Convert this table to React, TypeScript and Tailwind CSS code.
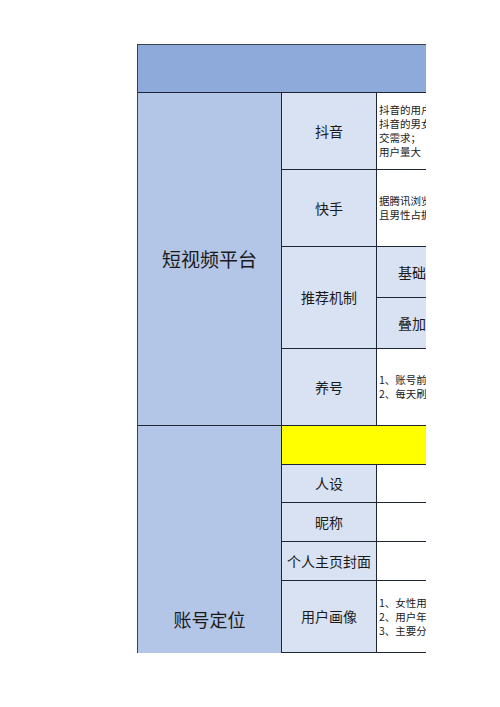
const line = "border-r border-b border-[#1f2633]";
const font = { fontFamily: '"Noto Sans CJK SC", "Noto Sans", sans-serif' };

function Note({ lines }: { lines: string[] }) {
  return (
    <div className={`${line} bg-white flex flex-col justify-center overflow-hidden pl-[2px] text-[10.5px] leading-[14px] text-[#1a1a1a]`}>
      {lines.map((t, i) => (
        <div key={i} className="whitespace-nowrap">{t}</div>
      ))}
    </div>
  );
}

function Label({ text, className = "" }: { text: string; className?: string }) {
  return (
    <div className={`${line} bg-[#d9e2f3] flex items-center justify-center text-[14px] text-[#1a1a1a] whitespace-nowrap ${className}`}>
      {text}
    </div>
  );
}

export default function App() {
  return (
    <div className="min-h-screen bg-white pt-[44px] pl-[137px]" style={font}>
      <div className="w-[289px] h-[609px] overflow-hidden border-t border-l border-[#3a4250]">
        <div className="grid grid-cols-[144px_95px_220px] grid-rows-[48px_77px_77px_51px_51px_77px_39px_38px_39px_39px_72px_160px]">
          {/* header */}
          <div className={`${line} col-span-3 bg-[#8eaadb]`} />

          {/* 短视频平台 */}
          <div className={`${line} row-span-5 bg-[#b4c6e7] flex items-center justify-center text-[19px] text-[#1a1a1a]`}>
            短视频平台
          </div>
          <Label text="抖音" />
          <Note
            lines={[
              "抖音的用户群体以一二线城市年轻人为主；",
              "抖音的男女比例均衡，能够满足用户社",
              "交需求；",
              "用户量大（日活跃用户超过四亿）；",
            ]}
          />

          <Label text="快手" />
          <Note lines={["据腾讯浏览器指数显示，快手用户集中在下沉市场，", "且男性占据比例略高于女性；"]} />

          <Label text="推荐机制" className="row-span-2" />
          <div className={`${line} bg-[#d9e2f3] flex items-center pl-[21px] text-[14px] whitespace-nowrap overflow-hidden text-[#1a1a1a]`}>
            基础流量池
          </div>
          <div className={`${line} bg-[#d9e2f3] flex items-center pl-[21px] text-[14px] whitespace-nowrap overflow-hidden text-[#1a1a1a]`}>
            叠加推荐
          </div>

          <Label text="养号" />
          <Note lines={["1、账号前期不要急于发布作品，先正常浏览；", "2、每天刷同领域视频，点赞评论关注；"]} />

          {/* 账号定位 */}
          <div className={`${line} row-span-6 bg-[#b4c6e7] flex items-center justify-center text-[18px] text-[#1a1a1a]`}>
            账号定位
          </div>
          <div className={`${line} col-span-2 bg-[#ffff00]`} />

          <Label text="人设" />
          <div className={`${line} bg-white`} />
          <Label text="昵称" />
          <div className={`${line} bg-white`} />
          <Label text="个人主页封面" />
          <div className={`${line} bg-white`} />
          <Label text="用户画像" />
          <Note lines={["1、女性用户占比较高；", "2、用户年龄集中在18-35岁；", "3、主要分布在一二线城市；"]} />

          <Label text="" />
          <div className={`${line} bg-white`} />
        </div>
      </div>
    </div>
  );
}
